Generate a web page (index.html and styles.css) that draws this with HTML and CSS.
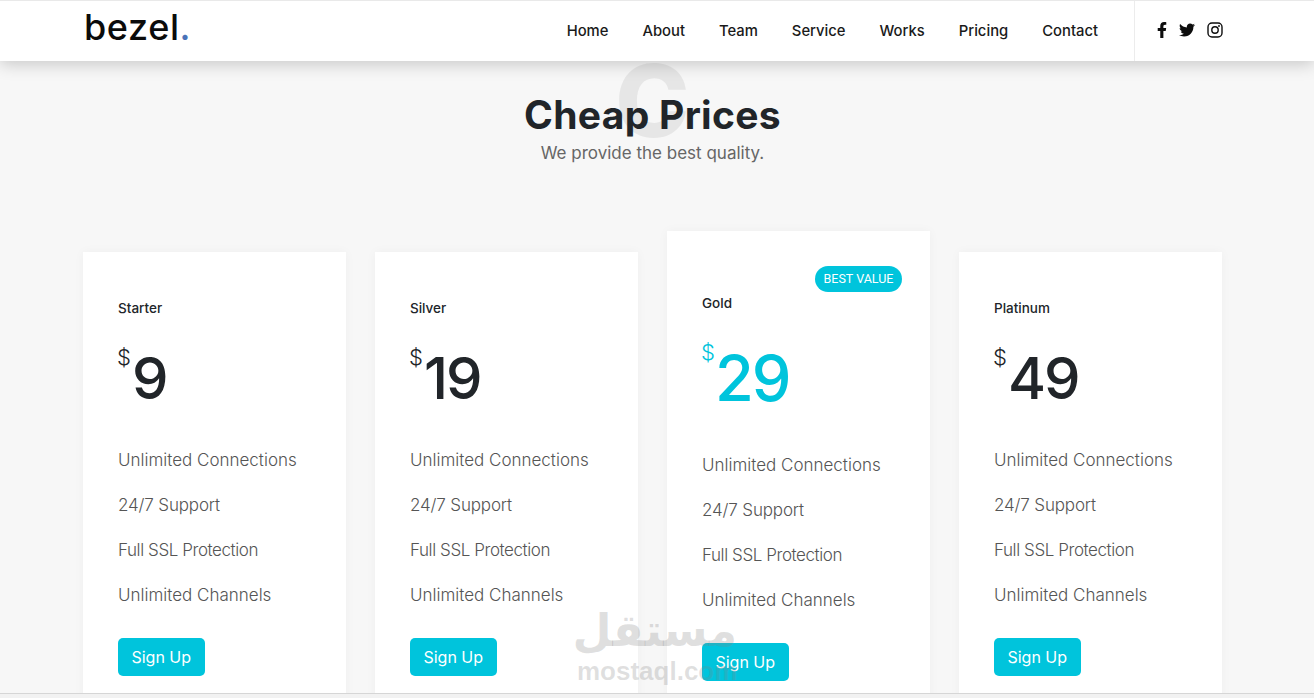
FILE: index.html
```html
<!DOCTYPE html>
<html lang="en">
<head>
<meta charset="utf-8">
<title>bezel.</title>
<link rel="stylesheet" href="styles.css">
</head>
<body>
<header class="topbar">
  <div class="logo">bezel<span class="logo-dot">.</span></div>
  <nav class="nav">
    <a>Home</a><a>About</a><a>Team</a><a>Service</a><a>Works</a><a>Pricing</a><a>Contact</a>
  </nav>
  <div class="social">
    <svg class="ic-f" viewBox="0 0 320 512"><path d="M279.14 288l14.22-92.66h-88.91v-60.13c0-25.35 12.42-50.06 52.24-50.06h40.42V6.26S260.43 0 225.36 0c-73.22 0-121.08 44.38-121.08 124.72v70.62H22.89V288h81.39v224h100.17V288z"/></svg>
    <svg class="ic-t" viewBox="0 0 512 512"><path d="M459.37 151.716c.325 4.548.325 9.097.325 13.645 0 138.72-105.583 298.558-298.558 298.558-59.452 0-114.68-17.219-161.137-47.106 8.447.974 16.568 1.299 25.34 1.299 49.055 0 94.213-16.568 130.274-44.832-46.132-.975-84.792-31.188-98.112-72.772 6.498.974 12.995 1.624 19.818 1.624 9.421 0 18.843-1.3 27.614-3.573-48.081-9.747-84.143-51.98-84.143-102.985v-1.299c13.969 7.797 30.214 12.67 47.431 13.319-28.264-18.843-46.781-51.005-46.781-87.391 0-19.492 5.197-37.36 14.294-52.954 51.655 63.675 129.3 105.258 216.365 109.807-1.624-7.797-2.599-15.918-2.599-24.04 0-57.828 46.782-104.934 104.934-104.934 30.213 0 57.502 12.67 76.67 33.137 23.715-4.548 46.456-13.32 66.599-25.34-7.798 24.366-24.366 44.833-46.132 57.827 21.117-2.273 41.584-8.122 60.426-16.243-14.292 20.791-32.161 39.308-52.628 54.253z"/></svg>
    <svg class="ic-i" viewBox="0 0 16 16"><rect x="1" y="1" width="14" height="14" rx="4" class="ig"/><circle cx="8" cy="8" r="3.2" class="ig"/><circle cx="12" cy="4" r="0.9"/></svg>
  </div>
</header>

<main class="page">
  <section class="title">
    <div class="ghost">C</div>
    <h1>Cheap Prices</h1>
    <p>We provide the best quality.</p>
  </section>

  <section class="plans">
    <article class="plan">
      <h2>Starter</h2>
      <div class="price"><span class="cur">$</span><span class="amt">9</span></div>
      <ul><li>Unlimited Connections</li><li>24/7 Support</li><li>Full SSL Protection</li><li>Unlimited Channels</li></ul>
      <a class="btn">Sign Up</a>
    </article>
    <article class="plan">
      <h2>Silver</h2>
      <div class="price"><span class="cur">$</span><span class="amt">19</span></div>
      <ul><li>Unlimited Connections</li><li>24/7 Support</li><li>Full SSL Protection</li><li>Unlimited Channels</li></ul>
      <a class="btn">Sign Up</a>
    </article>
    <article class="plan plan-gold">
      <span class="badge">BEST VALUE</span>
      <h2>Gold</h2>
      <div class="price"><span class="cur">$</span><span class="amt">29</span></div>
      <ul><li>Unlimited Connections</li><li>24/7 Support</li><li>Full SSL Protection</li><li>Unlimited Channels</li></ul>
      <a class="btn">Sign Up</a>
    </article>
    <article class="plan">
      <h2>Platinum</h2>
      <div class="price"><span class="cur">$</span><span class="amt">49</span></div>
      <ul><li>Unlimited Connections</li><li>24/7 Support</li><li>Full SSL Protection</li><li>Unlimited Channels</li></ul>
      <a class="btn">Sign Up</a>
    </article>
  </section>
</main>

<div class="watermark">
  <div class="wm-ar" lang="ar" dir="rtl">مستقل</div>
  <div class="wm-en">mostaql.com</div>
</div>
<div class="edge"></div>
</body>
</html>
```
FILE: styles.css
```css
* { box-sizing: border-box; }
html, body { height: 100%; }
body {
  margin: 0;
  height: 698px;
  overflow: hidden;
  background: #f7f7f7;
  font-family: "Inter", "Liberation Sans", sans-serif;
  color: #212529;
  position: relative;
}
.topbar {
  position: relative;
  z-index: 2;
  height: 61px;
  background: #fff;
  border-top: 1px solid #e9e9e9;
  box-shadow: 0 3px 16px rgba(0,0,0,.2);
  display: flex;
  align-items: center;
  padding-left: 84px;
}
.logo {
  font-size: 36px;
  font-weight: 500;
  color: #0b0b0b;
  line-height: 1;
  letter-spacing: .6px;
  margin-top: -8px;
}
.logo-dot { color: #4a72b8; }
.nav {
  margin-left: auto;
  display: flex;
  gap: 34px;
  padding-right: 36px;
  font-size: 14.8px;
  font-weight: 500;
  color: #1a1a1a;
}
.social {
  align-self: stretch;
  width: 180px;
  border-left: 1px solid #ececec;
  display: flex;
  align-items: center;
  padding-left: 22px;
  padding-bottom: 2px;
  gap: 12px;
}
.social svg { display: block; fill: #0d0d0d; }
.ic-f { width: 10px; height: 16px; }
.ic-t { width: 16px; height: 16px; }
.ic-i { width: 16px; height: 16px; margin-left: 0; }
.ig { fill: none !important; stroke: #0d0d0d; stroke-width: 1.4; }
.page { padding: 0 92px 0 83px; }
.title {
  position: relative;
  text-align: center;
  height: 191px;
  padding-top: 30px;
}
.ghost {
  position: absolute;
  left: 0; right: 0;
  top: -30px;
  font-size: 100px;
  line-height: 140px;
  font-weight: 800;
  color: #e6e6e6;
}
.title h1 {
  position: relative;
  margin: 0;
  top: 1px;
  font-size: 39px;
  line-height: 46px;
  font-weight: 700;
  letter-spacing: .3px;
  color: #212529;
}
.title p {
  position: relative;
  margin: 4px 0 0;
  font-size: 17px;
  line-height: 24px;
  color: #666;
}
.plans {
  display: flex;
  gap: 29px;
  align-items: flex-start;
}
.plan {
  position: relative;
  width: 263px;
  height: 460px;
  flex: none;
  background: #fff;
  padding: 47px 35px 0;
  box-shadow: 0 0 10px rgba(0,0,0,.04);
}
.plan-gold {
  margin-top: -21px;
  height: 481px;
  padding-top: 63px;
}
.plan h2 {
  margin: 0;
  font-size: 13.5px;
  line-height: 18px;
  font-weight: 500;
  color: #212529;
}
.price {
  display: flex;
  align-items: flex-start;
  margin-top: 26px;
  color: #212529;
}
.cur {
  font-size: 22px;
  line-height: 26px;
  font-weight: 300;
  margin-top: 1px;
  margin-left: -1px;
}
.amt {
  font-size: 58px;
  line-height: 62px;
  font-weight: 500;
  letter-spacing: -2px;
  margin-top: 4px;
  margin-left: 1px;
}
.plan ul {
  list-style: none;
  margin: 39px 0 0;
  padding: 0;
}
.plan li {
  font-size: 17px;
  line-height: 24px;
  font-weight: 300;
  color: #555;
  margin-bottom: 21px;
}
.plan li:nth-child(2) { letter-spacing: -.15px; }
.plan li:nth-child(3) { letter-spacing: -.42px; }
.btn {
  display: inline-block;
  margin-top: 10px;
  width: 86.5px;
  height: 38px;
  border-radius: 5px;
  background: #00c4dc;
  color: #fff;
  text-align: center;
  font-size: 16px;
  line-height: 38px;
}
.plan-gold .price { color: #00c4dc; margin-top: 23px; }
.plan-gold .cur { margin-top: 4px; }
.plan-gold .amt { font-size: 63px; margin-top: 12px; margin-left: 0; }
.plan-gold ul { margin-top: 44px; }
.badge {
  position: absolute;
  top: 35px;
  right: 28px;
  width: 87px;
  height: 26px;
  border-radius: 13px;
  background: #00c4dc;
  color: #fff;
  font: 400 12.5px/26px "Roboto", sans-serif;
  text-align: center;
}
.watermark {
  position: absolute;
  z-index: 3;
  left: 577px;
  top: 604px;
  width: 160px;
  color: rgba(130,130,130,.25);
  text-align: center;
  pointer-events: none;
}
.wm-ar { font: 700 45px/54px "DejaVu Sans", sans-serif; padding-left: 2px; white-space: nowrap; }
.wm-en { font: 700 26px/26px "Liberation Sans", sans-serif; }
.edge {
  position: absolute;
  z-index: 4;
  left: 0; right: 0; bottom: 0;
  height: 5px;
  background: #f2f2f2;
  border-top: 1px solid #d6d6d6;
}
```
